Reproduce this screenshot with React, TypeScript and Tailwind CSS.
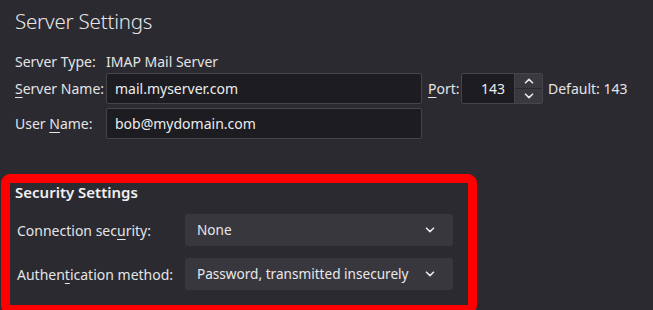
import React from "react"

const font = { fontFamily: '"Noto Sans", "Open Sans", sans-serif' }

function Chevron({ up = false }: { up?: boolean }) {
  return (
    <svg width="10" height="6" viewBox="0 0 10 6" className={up ? "rotate-180" : ""}>
      <path d="M1.5 1.2 L5 4.6 L8.5 1.2" fill="none" stroke="#e8e8ea" strokeWidth="1.6" strokeLinecap="round" strokeLinejoin="round" />
    </svg>
  )
}

function SelectBox({ value }: { value: string }) {
  return (
    <div className="flex h-[32px] w-[268px] items-center justify-between rounded-[3px] bg-[#38373d] pl-[12px] pr-[18px] text-[13.6px] text-[#e8e8ea]">
      <span>{value}</span>
      <Chevron />
    </div>
  )
}

export default function App() {
  return (
    <div className="h-[310px] w-[653px] overflow-hidden bg-[#2b2a30] text-[#e4e4e6]" style={font}>
      <div className="pl-[15px] pt-[5px]">
        <h1 className="text-[20.5px] font-light leading-[32px] tracking-[-0.2px] text-[#e6e6e8]">Server Settings</h1>

        <div className="mt-[14px] flex h-[20px] items-center text-[14px]">
          <span className="w-[91px]">Server Type:</span>
          <span>IMAP Mail Server</span>
        </div>

        <div className="mt-[2px] flex h-[31px] items-center text-[14px]">
          <span className="w-[91px]"><span className="underline underline-offset-[3px]">S</span>erver Name:</span>
          <div className="flex h-[31px] w-[316px] items-center rounded-[2px] border border-[#45444b] bg-[#1d1c21] px-[8px] text-[#ececee]">mail.myserver.com</div>
          <span className="ml-[6px] w-[33px]"><span className="underline underline-offset-[3px]">P</span>ort:</span>
          <div className="flex h-[31px] w-[82px] rounded-[2px] border border-[#45444b] bg-[#1d1c21]">
            <div className="flex flex-1 items-center justify-end pr-[9px] text-[#ececee]">143</div>
            <div className="flex w-[28px] flex-col border-l border-[#45444b] bg-[#3a393f]">
              <div className="flex flex-1 items-center justify-center border-b border-[#2a292e]"><Chevron up /></div>
              <div className="flex flex-1 items-center justify-center"><Chevron /></div>
            </div>
          </div>
          <span className="ml-[5px]">Default: 143</span>
        </div>

        <div className="mt-[4px] flex h-[31px] items-center text-[14px]">
          <span className="w-[91px]">User <span className="underline underline-offset-[3px]">N</span>ame:</span>
          <div className="flex h-[31px] w-[316px] items-center rounded-[2px] border border-[#45444b] bg-[#1d1c21] px-[8px] text-[#ececee]">bob@mydomain.com</div>
        </div>
      </div>

      <div className="ml-[1px] mt-[35px] h-[140px] w-[476px] rounded-[9px] border-[9px] border-[#ff0000] bg-[#2b2a30]">
        <div className="pl-[5px] pt-[0px]">
          <h2 className="text-[15px] font-semibold leading-[18px] text-[#f0f0f2]">Security Settings</h2>
          <div className="mt-[13px] flex items-center text-[14px]">
            <span className="w-[170px] pl-[2px]">Connection sec<span className="underline underline-offset-[3px]">u</span>rity:</span>
            <SelectBox value="None" />
          </div>
          <div className="mt-[12px] flex items-center text-[14px]">
            <span className="w-[170px] pl-[2px]">Authen<span className="underline underline-offset-[3px]">t</span>ication method:</span>
            <SelectBox value="Password, transmitted insecurely" />
          </div>
        </div>
      </div>
    </div>
  )
}
